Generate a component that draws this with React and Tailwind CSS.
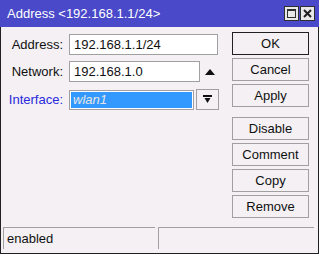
import React from 'react';

const font = { fontFamily: '"Liberation Sans", Arial, sans-serif' };

function SideButton({ label, focused }) {
  return (
    <button
      className={
        'w-[77px] h-[23px] flex items-center justify-center text-[13px] text-[#101010] bg-[#f4f0f4] border ' +
        (focused ? 'border-[#202020]' : 'border-[#a0a0a0]')
      }
    >
      {label}
    </button>
  );
}

function Label({ children, blue }) {
  return (
    <div className={'w-[62px] text-right text-[13px] ' + (blue ? 'text-[#2a2adb]' : 'text-[#101010]')}>
      {children}
    </div>
  );
}

export default function App() {
  return (
    <div style={font} className="w-[319px] h-[254px] bg-[#f4f0f4] border border-[#202020] border-t-0 flex flex-col">
      {/* title bar */}
      <div className="h-[27px] -mx-px bg-[#4949c9] flex items-center pl-[7px] pr-[4px]">
        <span className="text-[13px] text-white flex-1 leading-none">Address &lt;192.168.1.1/24&gt;</span>
        <div className="flex gap-[1px]">
          <div className="w-[15px] h-[15px] bg-[#e8e8e8] border border-[#303030] flex items-center justify-center">
            <div className="w-[9px] h-[9px] border border-[#303030] border-t-2"></div>
          </div>
          <div className="w-[15px] h-[15px] bg-[#e8e8e8] border border-[#303030] flex items-center justify-center">
            <svg width="9" height="9" viewBox="0 0 9 9">
              <path d="M1 1 L8 8 M8 1 L1 8" stroke="#202020" strokeWidth="2" />
            </svg>
          </div>
        </div>
      </div>

      {/* body */}
      <div className="flex-1 flex">
        <div className="flex-1 flex flex-col pt-[7px] gap-[6px]">
          <div className="flex items-center gap-[6px] h-[21px]">
            <Label>Address:</Label>
            <div className="w-[149px] h-[21px] bg-white border border-[#a0a0a0] flex items-center pl-[4px] text-[13px] text-[#101010]">
              192.168.1.1/24
            </div>
          </div>
          <div className="flex items-center gap-[6px] h-[21px]">
            <Label>Network:</Label>
            <div className="w-[131px] h-[21px] bg-white border border-[#a0a0a0] flex items-center pl-[4px] text-[13px] text-[#101010]">
              192.168.1.0
            </div>
            <svg width="10" height="6" viewBox="0 0 10 6" className="ml-[-1px]">
              <path d="M0 6 L5 0 L10 6 Z" fill="#101010" />
            </svg>
          </div>
          <div className="flex items-center gap-[6px] h-[21px] mt-[1px]">
            <Label blue>Interface:</Label>
            <div className="flex items-center gap-[2px]">
              <div className="w-[125px] h-[20px] bg-[#3399ff] border border-[#a0a0a0] outline outline-1 outline-white -outline-offset-2 flex items-center pl-[3px] text-[13px] italic text-[#e6e6e6]">
                wlan1
              </div>
              <div className="w-[23px] h-[21px] bg-[#f4f0f4] border border-[#a0a0a0] flex items-center justify-center">
                <svg width="9" height="9" viewBox="0 0 9 9">
                  <path d="M0 0 H9 V2 H0 Z" fill="#101010" />
                  <path d="M1.5 3 H7.5 L4.5 8 Z" fill="#101010" />
                </svg>
              </div>
            </div>
          </div>
        </div>

        <div className="w-[86px] flex flex-col pt-[5px] gap-[3px]">
          <SideButton label="OK" focused />
          <SideButton label="Cancel" />
          <SideButton label="Apply" />
          <div className="h-[4px]"></div>
          <SideButton label="Disable" />
          <SideButton label="Comment" />
          <SideButton label="Copy" />
          <SideButton label="Remove" />
        </div>
      </div>

      {/* status bar */}
      <div className="h-[26px] flex gap-[3px] pl-[2px] pr-[4px] pb-[4px]">
        <div className="w-[152px] border-t border-l border-[#a0a0a0] flex items-center pl-[3px] text-[13px] text-[#101010]">
          enabled
        </div>
        <div className="flex-1 border-t border-l border-[#a0a0a0]"></div>
      </div>
    </div>
  );
}
